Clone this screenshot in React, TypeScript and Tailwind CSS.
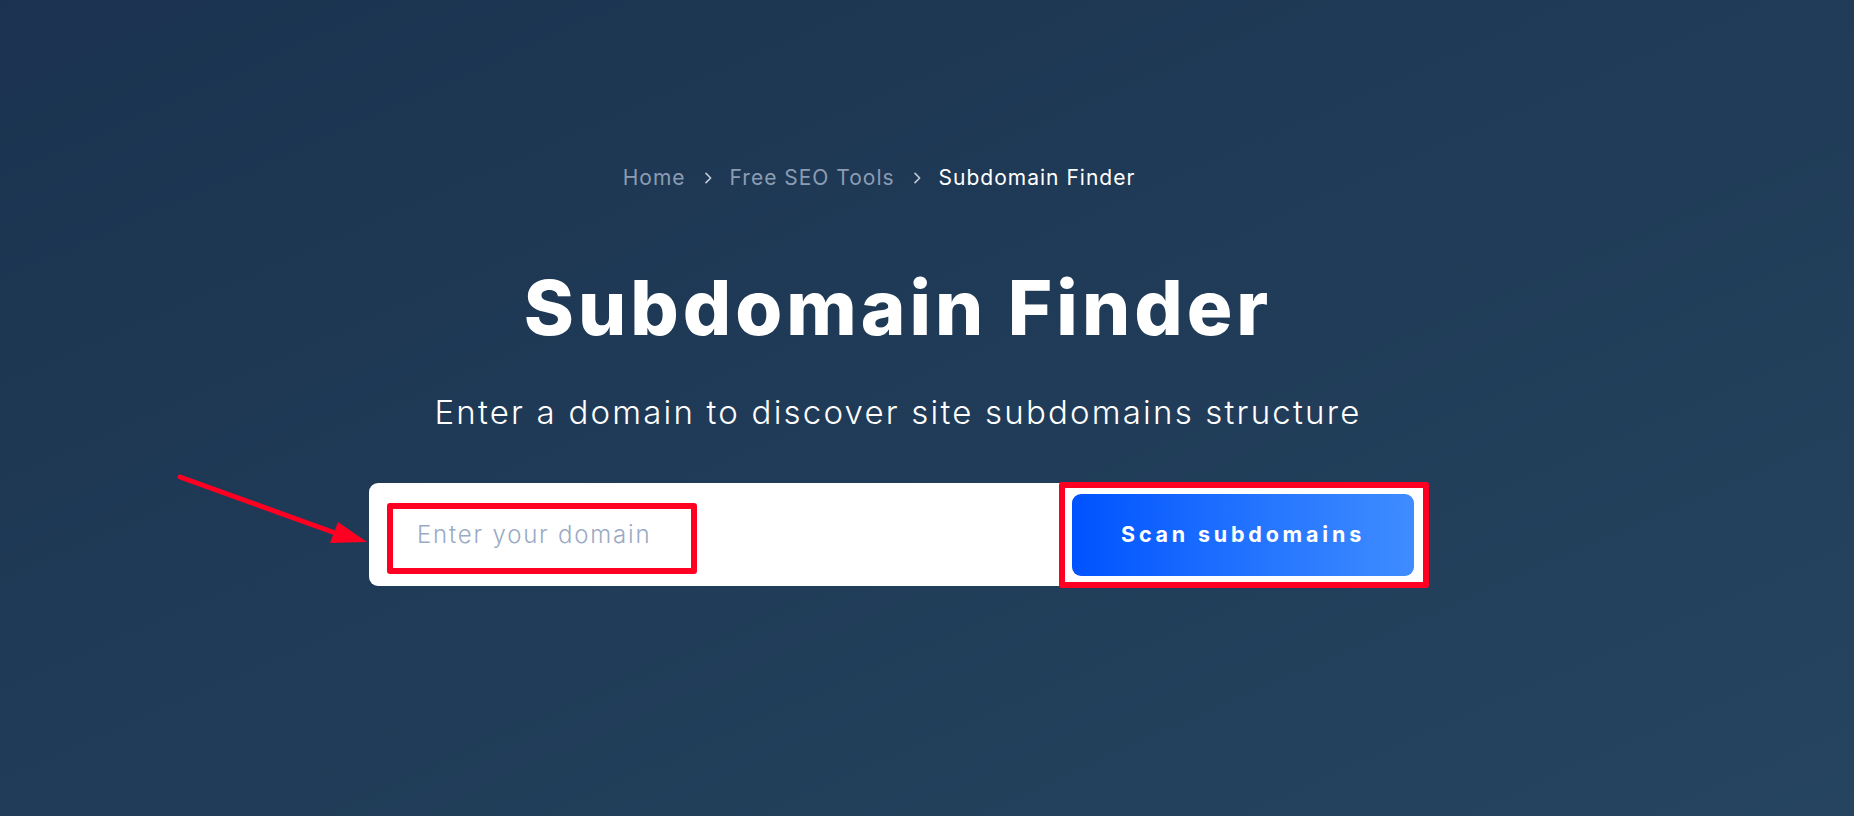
import React from "react";

const App: React.FC = () => {
  return (
    <div className="relative h-[816px] w-full overflow-hidden bg-gradient-to-br from-[#1b3350] to-[#25445f] font-['Inter',sans-serif]">
      <div className="flex flex-col items-center pr-[58px] pt-[166px]">
        {/* breadcrumb */}
        <nav className="mr-[38px] flex items-center gap-[14px] text-[21px] leading-[24px] tracking-[1px]">
          <span className="text-[#8c9db3]">Home</span>
          <svg viewBox="0 0 24 24" className="h-[16px] w-[16px]" fill="none" stroke="#c3ccd8" strokeWidth={2.4}>
            <path d="M9 5l7 7-7 7" strokeLinecap="round" strokeLinejoin="round" />
          </svg>
          <span className="text-[#8c9db3]">Free SEO Tools</span>
          <svg viewBox="0 0 24 24" className="h-[16px] w-[16px]" fill="none" stroke="#c3ccd8" strokeWidth={2.4}>
            <path d="M9 5l7 7-7 7" strokeLinecap="round" strokeLinejoin="round" />
          </svg>
          <span className="text-white">Subdomain Finder</span>
        </nav>

        <h1 className="mt-[73px] text-[76px] font-extrabold leading-[88px] tracking-[4px] text-white">
          Subdomain Finder
        </h1>

        <p className="mt-[41px] text-[33px] font-light leading-[40px] tracking-[2.2px] text-white">
          Enter a domain to discover site subdomains structure
        </p>

        <div className="mt-[51px] flex h-[103px] w-[1058px] items-center rounded-[9px] bg-white pl-[48px] pr-[13px]">
          <input
            type="text"
            placeholder="Enter your domain"
            className="h-full flex-1 bg-transparent text-[24px] font-light tracking-[1.8px] text-[#334155] outline-none placeholder:text-[#9aaac4]"
          />
          <button className="h-[82px] w-[342px] rounded-[9px] bg-gradient-to-r from-[#0052ff] to-[#3f8cff] text-[21.5px] font-bold tracking-[3.8px] text-white">
            Scan subdomains
          </button>
        </div>
      </div>

      {/* annotation overlays */}
      <div className="pointer-events-none absolute left-[387px] top-[503px] h-[71px] w-[310px] rounded-[3px] border-[6px] border-[#ff0022]" />
      <div className="pointer-events-none absolute left-[1059px] top-[482px] h-[106px] w-[370px] rounded-[3px] border-[6px] border-[#ff0022]" />
      <svg className="pointer-events-none absolute left-[160px] top-[460px] h-[100px] w-[220px]" viewBox="0 0 220 100">
        <line x1="20" y1="17" x2="178" y2="74" stroke="#ff0022" strokeWidth={5} strokeLinecap="round" />
        <polygon points="207,82 170,83 178,62" fill="#ff0022" />
      </svg>
    </div>
  );
};

export default App;
